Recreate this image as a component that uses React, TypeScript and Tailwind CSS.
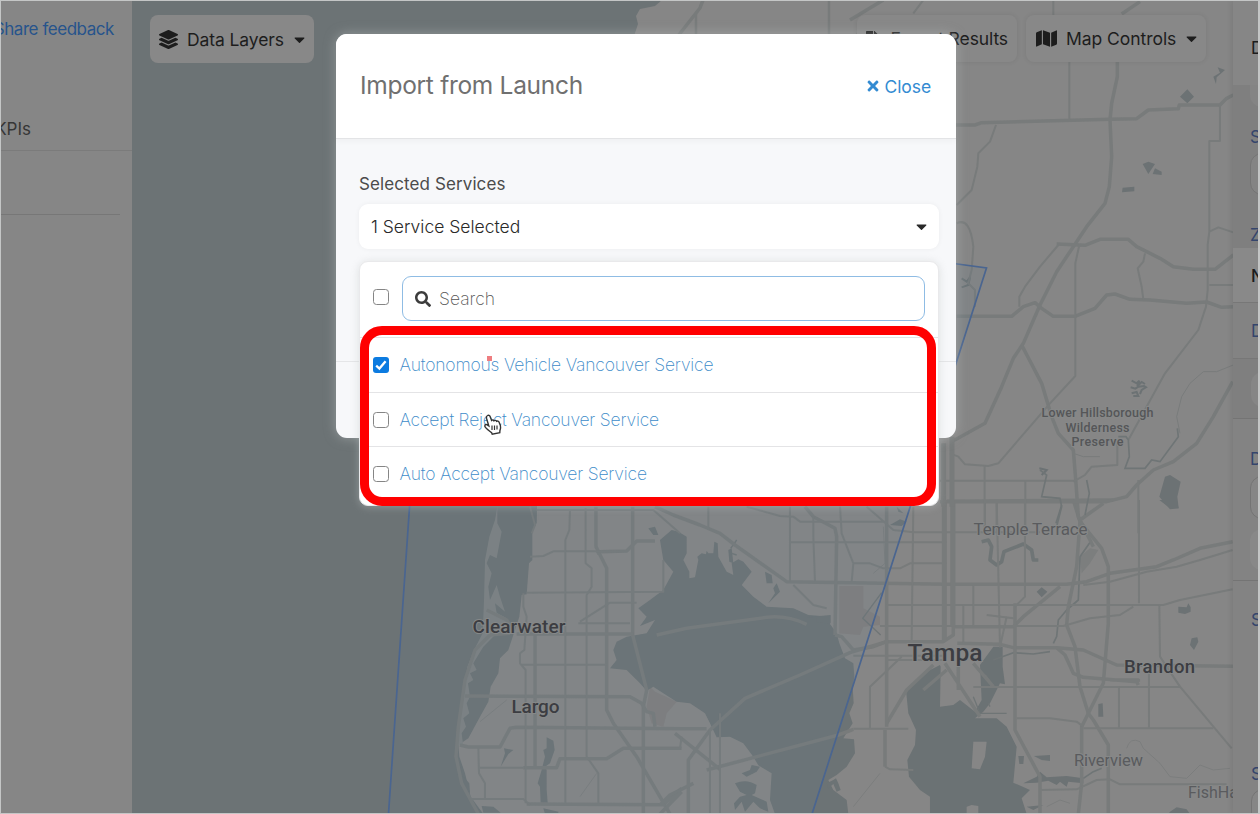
import React from "react";
import { FaLayerGroup, FaMap, FaTimes, FaSearch, FaCaretDown, FaFileExport } from "react-icons/fa";

const WATER = "#6c7375";
const LAND = "#868686";
const ROAD = "#787b7b";

const thickNorth = [
  "M310,820 L280,940 M-60,290 L55,100 M30,60 L130,0",
  "M832,180 L832,230 L815,310 L810,360 L815,470 L808,560 L795,610 L740,680 L700,740 L650,815 L600,915 L550,1030 L520,1075 L485,1160 L435,1270 L335,1325",
  "M340,375 L405,375 L425,368 L810,358 L890,356 L925,330 L1015,326 L1018,315 L1140,315 L1160,295 L1180,285",
  "M545,1035 L605,1150 L635,1250 L655,1300 L700,1350 L708,1450 L715,1550 L760,1640",
  "M350,949 L515,949 L550,920 L585,908 L605,925 L640,949 L705,949 L765,925 L800,885 L825,882 L870,898 L930,900 L1040,910 L1100,906 L1145,922 L1180,920",
  "M650,732 L735,736 L780,718 L865,718 L890,740 L960,775 L1000,800 L1060,808 L1125,808 L1180,765",
  "M1178,1145 L1120,1250 L1070,1330 L1000,1385 L940,1410 L890,1455 L860,1490 L800,1505 L720,1505 L300,1505",
  "M845,42 L900,5",
  "M720,1560 L790,1510",
];
const thinNorth = [
  "M640,0 L640,45 M688,185 L688,360 M220,40 L250,0",
  "M468,375 L450,425 L415,460 L412,500 L395,570 L350,615",
  "M1140,315 L1140,423 L1108,423 L1108,695 L1103,735 L1103,870 L1098,920 L1075,990 L975,1120 L865,1320",
  "M1108,695 L1135,682 L1180,697 M1108,855 L1180,855",
  "M718,735 L706,790 L706,1128 L630,1210 L475,1390 L445,1398 L375,1393 L355,1370 L330,1360",
  "M655,735 L600,800 L555,860 L538,890 L538,920",
  "M350,670 Q390,650 400,740 L395,810 L385,850 L405,870 L405,920",
  "M915,760 L910,785 L893,805 L905,860 L910,898",
  "M434,1397 L434,1600 M300,1442 L705,1442 M556,1442 L556,1600 M470,1510 L470,1600 M895,1440 L895,1600",
  "M700,1445 L735,1425 L755,1400 L832,1395 L832,1330",
];
const streams = [
  "M865,1320 L858,1310 L835,1310 M865,1320 L868,1370 L855,1405 L915,1405 L935,1380 L960,1385 L1015,1310 L1012,1285 M740,1440 L748,1480 L735,1545 M600,1410 L620,1425 L605,1490 L660,1495 L665,1520 L650,1580",
];

const thickSouth = [
  "M648,20 L648,140 L680,205 L680,630 L700,670 L770,770 L870,942",
  "M758,20 L758,405 L800,570 L790,620 L790,942",
  "M465,405 L465,800",
  "M410,402 L760,402 M650,160 L660,155 L740,153 L770,123 L825,123",
  "M240,735 L265,741 L360,741 L390,685 L410,682 L910,686 L980,686",
  "M430,803 L530,803 L540,776 L680,776 L730,745 L905,745",
  "M255,588 L750,590 L785,610 L800,635 L820,640 L825,680",
  "M440,912 L850,914 L905,865 M840,942 L905,875",
  "M320,330 L380,360 L395,385 M390,400 L330,405 L285,450 L255,540 L235,680 L228,770 L245,850 L295,942",
  "M825,20 L880,45 L960,75 L1020,100 L1065,135 L1220,245 L1700,253 L2060,253 L2120,245 L2190,220 L2330,200 L2380,180 L2460,145 L2558,125",
  "M1275,20 L1300,50 L1365,85 L1370,110 L1365,405",
  "M1365,405 L1385,410 L1420,450 L1480,440 L1520,425 L1690,425 L1720,405 L1720,380 L1900,380 L1930,350 L2040,260",
  "M1693,0 L1693,420 M1717,0 L1717,380 M1700,4 L2200,0",
  "M1732,430 L1860,433 L1900,443 L2030,443 L2055,465 L2080,520 L2110,532 L2270,545 L2275,555 M2275,545 L2275,540 L2190,540",
  "M2080,0 L2100,65 L2090,200 L2065,320 L2060,375 L2085,440 L2100,560 L2125,640 L2140,660 L2185,735 L2185,942",
  "M2100,65 L2165,145 L2185,200 L2185,370 L2170,550 L2105,680 L2105,850 L2095,942",
  "M2030,443 L2110,450 L2210,495 L2560,499",
  "M925,942 L925,780 L990,690 L1095,595 L1260,525 L1410,458 L1520,425",
  "M885,700 L1020,808 M840,915 L870,885 L940,850",
  "M1520,670 L1580,570 L1660,495 M1580,0 L1580,10",
  "M1520,20 L1520,680 M1515,690 L1515,800",
  "M1905,310 L1905,690 L1980,830 L1980,942",
  "M980,810 L1375,705 L1420,688",
  "M830,405 L920,385 L1160,352 Q1220,345 1280,373",
  "M1630,570 L1700,510 M1780,490 L1840,560 M1695,490 L1800,650 M1735,490 L1735,570",
];
const thinSouth = [
  "M430,280 L430,320 L440,350 L433,450 L420,460 L420,490 L437,510 L437,910",
  "M440,278 L850,275 L850,180 M450,170 L490,168 L520,154 L650,154 L720,155",
  "M570,30 L568,90 L556,120 L556,910 M617,25 L617,190 L635,205 L635,260 L620,285 L620,770 L655,820 L655,910",
  "M425,494 L680,494 M595,370 L750,370 M600,365 L690,308 L770,308 M295,745 L297,820 L315,850 L315,900 M300,803 L430,803 M270,897 L430,897 L450,915",
  "M450,20 L465,75 L455,100 M470,30 L820,30 L900,100",
  "M1230,20 L1230,245 M985,20 L985,90 M1230,127 L1700,127 M1300,50 L1300,110 L1305,245",
  "M1380,20 L1385,100 L1420,190 L1415,245 M1420,190 L1470,190 L1510,205 L1560,205 L1590,190 L1700,190",
  "M1100,20 L1200,48 L1240,50 L1260,65 L1520,65 M1460,20 L1540,90 L1600,97 L1980,97",
  "M1600,20 L1595,420 M1520,315 L2350,315 L2400,300 L2558,268 M1240,255 L1300,315 L1340,325",
  "M1500,378 L1920,378 L2050,378 L2130,355 L2220,345 L2260,320",
  "M1420,467 L1700,467 M1700,480 L1520,480 M1565,470 L1470,560 L1470,685",
  "M1420,686 L1585,686 M1515,800 L1530,808 L1600,810",
  "M1815,0 L1815,90 M1850,0 L1860,440 L1880,350 M1935,0 L1935,290 L1905,320 M2277,0 L2277,310 M2338,315 L2340,470 L2400,560 L2555,745",
  "M1780,255 L1780,380 M1750,315 L1750,430 M1780,561 L2400,561 M1840,560 L1815,525",
  "M1910,655 L2010,655 L2090,665 L2110,680 M2110,685 L2500,685 M2217,560 L2217,685 M2307,500 L2307,685",
  "M2110,255 L2190,245 L2300,215 L2390,200 L2460,180 L2558,150",
  "M1980,870 L2090,868 L2150,840 L2190,838 L2220,853 L2540,853",
  "M990,690 L990,942 M1020,640 L1020,942 M840,745 L900,745 L905,710",
  "M1820,345 L1900,355",
];

const bay =
  "M840,120 L875,90 L895,95 L920,110 L920,160 L910,180 L928,215 L928,235 L945,232 L955,180 L952,170 L965,160 L978,163 L980,152 L985,160 L1000,160 L1003,125 L1013,130 L1015,170 L1040,215 L1060,225 L1055,190 L1075,178 L1090,185 L1115,215 L1085,255 L1120,290 L1160,320 L1240,325 L1285,345 L1350,350 L1350,372 L1370,400 L1378,430 L1395,475 L1420,490 L1423,530 L1418,560 L1421,610 L1408,640 L1418,670 L1390,715 L1422,718 L1425,760 L1400,800 L1370,825 L1345,840 L1360,870 L1400,900 L1405,942 L1185,942 L1170,900 L1175,820 L1135,796 L1120,770 L1090,730 L1050,710 L1010,712 L990,670 L975,640 L930,610 L890,605 L850,580 L820,560 L800,572 L780,550 L740,510 L690,505 L710,480 L700,450 L710,425 L740,410 L800,400 L825,360 L780,378 L800,350 L775,325 L810,300 L850,270 L880,215 L850,180 Z";
const hillsborough =
  "M1680,495 L1640,515 L1578,570 L1585,640 L1608,690 L1605,735 L1582,780 L1587,830 L1620,870 L1650,890 L1650,942 L1940,942 L1925,895 L1950,870 L1900,848 L1910,740 L1880,680 L1850,655 L1785,655 L1810,635 L1830,610 L1860,550 L1875,553 L1868,500 L1868,440 L1840,440 L1800,495 L1805,600 L1785,635 L1740,600 L1720,615 L1680,620 L1682,500 Z";

type LabelProps = { x: number; y: number; size: number; width: number; fill?: string; weight?: number; children: string };
function Label({ x, y, size, width, fill = "#3c3d42", weight = 500, children }: LabelProps) {
  return (
    <text
      x={x}
      y={y}
      fontFamily="Roboto, sans-serif"
      fontSize={size}
      fontWeight={weight}
      fill={fill}
      stroke="#868888"
      strokeWidth={2}
      paintOrder="stroke"
      textAnchor="middle"
      textLength={width}
    >
      {children}
    </text>
  );
}

function MapCanvas() {
  return (
    <svg className="block h-[813px] w-[1101px]" viewBox="132 1 1101 813" preserveAspectRatio="none">
      <rect x={132} y={0} width={1101} height={814} fill={WATER} />
      <path d="M662,0 L655,6 L640,9 L636,16 L638,24 L634,36 L540,300 L537,507 L536,560 L1240,560 L1240,0 Z" fill={LAND} />
      <g transform="translate(380 500) scale(.33333)">
        <path
          d="M475,-10 L475,60 L457,95 L457,180 L447,190 L440,283 L425,285 L418,350 L400,405 L385,450 L360,475 L355,520 L332,560 L325,605 L300,650 L265,715 L235,735 L238,770 L255,820 L272,890 L310,942 L2570,942 L2570,-10 Z"
          fill={LAND}
        />
        <path
          d="M352,20 L345,60 L328,110 L315,180 L312,300 L308,400 L282,450 L262,500 L252,570 L242,640 L232,735 L250,738 L245,700 L258,680 L250,655 L268,640 L260,610 L270,590 L264,550 L280,540 L270,520 L290,510 L280,490 L310,440 L350,400 L400,395 L380,355 L350,338 L345,310 L375,335 L360,290 L350,255 L330,300 L325,260 L335,220 L320,190 L330,165 L350,175 L365,95 L352,70 Z"
          fill="#7e8283"
        />
        <path d="M1378,258 L1450,258 L1450,325 L1500,350 L1500,375 L1450,380 L1440,405 L1378,400 Z M810,560 L825,575 L890,605 L860,640 L850,680 L815,670 L800,620 Z" fill="#807e7e" />
        <path d="M2100,170 L2130,145 L2155,150 L2130,190 L2105,220 Z" fill="#7c7e7e" />
        <path d={bay} fill={WATER} />
        <path d={hillsborough} fill="#6b7274" />
        <path d="M1780,725 L1820,725 L1815,770 L1800,808 L1775,805 Z M1760,920 L1775,915 L1795,918 L1795,942 L1760,942 Z" fill={LAND} />
        <path
          d="M805,85 L825,80 L835,105 L820,105 Z M500,712 L520,722 L524,750 L510,790 L495,800 L500,810 L500,870 L503,908 L482,908 L480,860 L473,850 L485,810 L495,770 L490,750 L500,745 Z M372,745 L400,750 L385,762 L362,800 L375,760 Z M305,918 L340,920 L362,938 L310,938 Z M235,790 L250,830 L268,850 L270,880 L250,860 Z M490,925 L535,935 L535,942 L495,942 Z M1045,150 L1055,145 L1060,190 L1048,185 Z M1155,215 L1175,225 L1178,250 L1160,250 Z M1190,250 L1200,275 L1165,310 L1185,280 L1180,265 Z M1280,352 L1352,345 L1352,370 L1310,368 L1310,355 Z"
          fill={WATER}
        />
        <path
          d="M1065,850 Q1100,835 1130,855 L1125,880 L1115,885 L1160,905 L1165,935 L1140,925 L1120,905 L1095,935 L1085,905 L1065,930 L1062,910 L1080,890 L1100,885 L1080,875 Z M1085,820 L1110,810 L1115,795 L1140,800 L1130,815 L1100,830 Z"
          fill={WATER}
        />
        <path d="M1340,850 L1360,840 L1368,835 L1375,850 L1382,870 L1370,875 L1360,852 L1345,865 Z M1530,75 L1560,58 L1580,65 L1565,78 Z M1550,20 L1570,40 L1555,35 Z" fill={WATER} />
        <path
          d="M1970,275 L1985,262 L2002,275 L1985,292 Z M2395,320 L2420,322 L2425,310 L2432,322 L2432,335 L2415,342 L2395,338 Z M2435,415 L2452,412 L2455,425 L2442,450 L2430,435 Z M2155,612 L2168,610 L2170,650 L2155,650 Z M1962,768 L2010,765 L2010,783 L1985,780 Z M1915,768 L1932,768 L1930,792 L1918,792 Z M1930,850 L1970,830 L1980,815 L2000,832 L2060,828 L2110,835 L2110,850 L2065,845 L2060,860 L2040,845 L2030,855 L2005,842 L1970,848 Z M1940,920 L1990,915 L1960,930 Z M2370,935 L2390,922 L2420,928 L2430,942 L2365,942 Z M2338,0 L2390,0 L2396,25 L2370,25 Z"
          fill="#6c7274"
        />
        <g fill="none" stroke="#6f7576" strokeLinejoin="round">
          <path strokeWidth="11" d="M1805,125 L1825,120 L1835,140 L1830,180 L1850,195 L1865,185 L1872,155 L1930,132 L1955,150 L1960,180 L1975,180" />
          <path strokeWidth="5" d="M2045,15 L2028,70 M2135,120 L2100,170 L2095,300 L2060,330 L2035,360 L2030,410 L2020,430 M1840,480 L1900,458 L1960,462 L2010,455 M2110,835 L2140,815 L2165,805" />
          <path strokeWidth="4" d="M1505,278 L1448,355 L1502,405 M1780,590 L1800,640 L1880,640 M1825,610 L1830,620 M1070,120 L1052,145 M1055,160 L1070,165" />
          <path strokeWidth="3" stroke="#7b7d7d" d="M2240,745 Q2250,710 2280,725 L2290,745 L2340,790 L2370,830 L2420,835 L2460,795 L2500,810 L2550,805 M1510,80 L1515,190 L1480,220 M2000,920 L2040,900 L2070,910 M300,665 L380,600 M600,890 L650,820 M1420,920 L1500,820" />
        </g>
        <g fill="none" stroke={ROAD} strokeLinejoin="round">
          <g strokeWidth="10.5">{thickSouth.map((d) => <path key={d} d={d} />)}</g>
          <g strokeWidth="6">{thinSouth.map((d) => <path key={d} d={d} />)}</g>
          <path d="M1693,0 L1693,420 M1719,0 L1719,380" strokeWidth="15" />
        </g>
        <path d="M90,20 L25,942 L1295,942 L1590,20 Z" fill="#5f7f8f" fillOpacity=".1" />
      </g>
      <g transform="translate(840 0) scale(.33333)">
        <path
          d="M1020,290 L1042,268 L1062,290 L1042,310 Z M908,492 L925,485 L945,492 L925,522 Z M945,505 L965,515 L965,525 L938,522 Z M848,563 L883,560 L883,574 L846,577 Z M1120,230 L1140,218 L1133,202 L1155,210 L1130,232 L1128,252 Z M975,1430 L990,1425 L1022,1445 L1012,1490 L1016,1525 L990,1528 L958,1490 Z"
          fill="#6c7274"
        />
        <path d="M875,1142 L890,1150 L898,1142 L892,1158 L905,1146 L915,1152 M872,1162 L886,1166 L895,1160 L912,1158 L918,1162 L905,1170 L900,1182 M875,1180 L890,1176 L895,1188 L880,1188 M365,835 L380,845 L390,832 L385,855 L365,862 M598,1405 L620,1410 L605,1425" fill="none" stroke="#6c7274" strokeWidth="6" />
        <g fill="none" stroke={ROAD} strokeLinejoin="round">
          <g strokeWidth="10.5">{thickNorth.map((d) => <path key={d} d={d} />)}</g>
          <g strokeWidth="6">{thinNorth.map((d) => <path key={d} d={d} />)}</g>
          <path d="M311,1330 L311,1520 M336,1310 L336,1520" strokeWidth="15" />
          <path d="M1180,1095 L1130,1115 L1090,1115 L1050,1150 L1025,1190 L1010,1250 L1020,1300 M780,1370 L730,1370 L700,1360" strokeWidth="3" />
        </g>
        <g fill="none" stroke="#6f7576" strokeWidth="5">{streams.map((d) => <path key={d} d={d} />)}</g>
        <path d="M440,806 L350,1090 L350,790 Z" fill="#5f7f8f" fillOpacity=".12" />
      </g>
      <g fill="none" stroke={ROAD}>
        <path d="M678,36 L700,8 L703,0" strokeWidth="3.5" />
        <path d="M696,14 V36 M829,0 V36" strokeWidth="2.4" />
      </g>
      <path d="M410,500 L388.5,814 M950,263 L986.5,268 L812,814" fill="none" stroke="#4a6590" strokeWidth="1.7" />
      <Label x={519} y={633} size={19} width={93}>Clearwater</Label>
      <Label x={535.5} y={713} size={19} width={48}>Largo</Label>
      <Label x={945} y={661} size={24.5} width={75}>Tampa</Label>
      <Label x={1159.5} y={673} size={18.5} width={71}>Brandon</Label>
      <Label x={1030.5} y={535} size={17} width={114} weight={400} fill="#5a5b5e">Temple Terrace</Label>
      <Label x={1108.5} y={766} size={16.5} width={69} weight={400} fill="#5a5b5e">Riverview</Label>
      <Label x={1213} y={798} size={16} width={50} weight={400} fill="#5a5b5e">FishHa</Label>
      <Label x={1097.5} y={417} size={12.5} width={112} fill="#555658">Lower Hillsborough</Label>
      <Label x={1097.5} y={431.5} size={12.5} width={64} fill="#555658">Wilderness</Label>
      <Label x={1097.5} y={446} size={12.5} width={52} fill="#555658">Preserve</Label>
    </svg>
  );
}

function Sidebar() {
  return (
    <aside className="flex w-[131px] shrink-0 flex-col overflow-hidden bg-[#868686] whitespace-nowrap">
      <div className="flex h-[114px] justify-end pt-[15px] pr-[18px] text-[17px] leading-[26px] tracking-[-0.45px] text-[#27548c]">
        <span>Share feedback</span>
      </div>
      <div className="flex h-9 justify-end border-b border-[#7b7b7b] pr-[101px] text-[17px] leading-7 text-[#363636]">
        <span>KPIs</span>
      </div>
      <div className="mr-3 h-16 border-b border-[#777]" />
    </aside>
  );
}

function DetailsPanel() {
  return (
    <aside className="relative flex w-[25px] shrink-0 flex-col overflow-hidden bg-[#838383] pl-[18px] text-[17px] leading-none text-[#34456c] shadow-[-2px_0_5px_rgba(0,0,0,0.08)]">
      <div className="-ml-[18px] h-[84px] shrink-0 bg-[#868686] pt-[39px] pl-[18px] text-[#1c1c1c]">D</div>
      <div className="-ml-[18px] h-[163px] shrink-0 bg-[#7f7f7f] pl-[17px]">
        <div className="h-[22px] w-10 rounded-bl-xl bg-[#848484]" />
        <div className="mt-[22px]">S</div>
        <div className="mt-[7px] h-[42px] w-10 rounded-xl border border-[#747474] bg-[#848484]" />
        <div className="mt-[32px]">Z</div>
      </div>
      <div className="-ml-[18px] h-[55px] shrink-0 border-b border-[#777] bg-[#898989] pt-[20px] pl-[18px] font-medium text-[#1c1c1c]">N</div>
      <div className="-ml-[18px] h-14 shrink-0 border-b border-[#777] pt-[20px] pl-[18px]">D</div>
      <div className="-ml-[18px] h-[60px] shrink-0 border-b border-[#747474] bg-[#7f7f7f] pt-[13px] pl-[18px]">
        <div className="h-[35px] w-10 rounded-xl bg-[#868686]" />
      </div>
      <div className="-ml-[18px] h-[162px] shrink-0 border-b border-[#747474] pt-[32px] pl-[17px]">
        D
        <div className="mt-[8px] h-[43px] w-10 rounded-xl border border-[#747474] bg-[#868686]" />
        <div className="mt-[10px] h-[41px] w-10 rounded-xl bg-[#888]" />
      </div>
      <div className="mt-[31px] h-[154px] shrink-0">S</div>
      <div className="shrink-0">S</div>
      <div className="mt-[6px] h-[40px] w-10 shrink-0 rounded-xl border border-[#747474] bg-[#868686]" />
    </aside>
  );
}

function Toolbar() {
  const button = "flex items-center rounded-lg bg-[#888888] text-[17.5px] text-[#1d1d1d] whitespace-nowrap";
  return (
    <div className="absolute inset-x-0 top-[14px] flex items-start pl-[18px]">
      <button className={`${button} h-12 w-[164px] pl-[9px]`}>
        <FaLayerGroup className="mr-[9px] size-[19px]" />
        <span className="relative top-px tracking-[-0.1px]">Data Layers</span>
        <FaCaretDown className="ml-[7px] size-[17px]" />
      </button>
      <div className="ml-auto flex gap-[9px] pr-[27px]">
        <button className={`${button} h-[47px] w-[160px] justify-end pr-[9px] shadow-[0_0_5px_rgba(0,0,0,0.08)]`}>
          <FaFileExport className="mr-[7px] size-[18px]" />
          <span className="relative top-px tracking-[-0.1px]">Export Results</span>
        </button>
        <button className={`${button} h-[47px] w-[180px] pl-[10px] shadow-[0_0_5px_rgba(0,0,0,0.08)]`}>
          <FaMap className="mr-[9px] size-[21px]" />
          <span className="relative top-px tracking-[-0.05px]">Map Controls</span>
          <FaCaretDown className="ml-[7px] size-[17px]" />
        </button>
      </div>
    </div>
  );
}

function Checkbox({ checked = false }: { checked?: boolean }) {
  return checked ? (
    <span className="flex size-4 shrink-0 items-center justify-center rounded-[3px] bg-[#0c7be0]">
      <svg viewBox="0 0 16 16" className="size-4">
        <path d="M3.2 8.6 6.4 11.6 12.6 4.2" fill="none" stroke="#fff" strokeWidth="2.3" />
      </svg>
    </span>
  ) : (
    <span className="size-4 shrink-0 rounded-[3.5px] border-[1.5px] border-[#858585] bg-white" />
  );
}

const services = [
  { name: "Autonomous Vehicle Vancouver Service", checked: true, row: "h-[55px] border-b" },
  { name: "Accept Reject Vancouver Service", checked: false, row: "h-[54px] border-b" },
  { name: "Auto Accept Vancouver Service", checked: false, row: "h-[54px]" },
];

function ServiceMenu() {
  return (
    <div className="absolute top-[227px] left-[23px] h-[245px] w-[580px] rounded-[9px] border border-[#e9e9eb] bg-white shadow-[0_1px_9px_rgba(190,195,195,0.45)]">
      <div className="flex h-[76px] items-start border-b border-[#e4e4e6] pt-[14px] pl-[13px]">
        <div className="mt-[13px] flex">
          <Checkbox />
        </div>
        <div className="ml-[13px] flex h-[45px] w-[523px] items-center rounded-[9px] border-[1.5px] border-[#8fbce4] pl-[12px]">
          <FaSearch className="mt-px size-4 text-[#3c3c3c]" />
          <span className="ml-[8px] pt-[2px] text-[17.5px] font-extralight text-[#555]">Search</span>
        </div>
      </div>
      {services.map((s) => (
        <div key={s.name} className={`flex items-center border-[#e4e4e6] pl-[13px] ${s.row}`}>
          <Checkbox checked={s.checked} />
          <span className="ml-[10.5px] pt-px text-[17.5px] font-extralight tracking-[-0.2px] whitespace-nowrap text-[#3d8bc9]">{s.name}</span>
        </div>
      ))}
      <div className="absolute top-[64px] left-0 h-[180px] w-[576px] rounded-[22px] border-[9px] border-[#ff0000]" />
      <span className="absolute top-[94px] left-[127px] size-[5px] bg-[#ee7d80]" />
      <svg viewBox="0 0 20 22" className="absolute top-[152px] left-[123px] h-[22px] w-[20px]">
        <path
          d="M4.5 1.5C5.5.9 6.7 1.4 7.1 2.5L8.6 6.4C9.1 5.8 10.4 5.8 11 6.8 11.9 6 13.2 6.3 13.6 7.3 14.5 6.8 15.6 7.1 16 8.1L17.4 11.6C17.9 13.2 17.4 15.3 16.9 16.7L16.8 18.7 9.2 20.2 8.6 18.6C7 17.3 4.5 16 2.4 13.4 1 11.7 2.2 10.2 3.8 10.7L5.8 12 3.5 4.2C3.2 3 3.6 2 4.5 1.5Z"
          fill="#fff"
          stroke="#333"
          strokeWidth="1.4"
        />
        <path d="M9 11.5V16M11.5 11.5V16M14 11.5V15.5" stroke="#333" strokeWidth="1.2" />
      </svg>
    </div>
  );
}

function ImportDialog() {
  return (
    <div className="absolute top-[34px] left-[336px] flex h-[404px] w-[620px] flex-col rounded-[11px] bg-[#f7f8fa] shadow-[0_0_12px_rgba(190,195,195,0.5)]">
      <header className="flex h-[105px] items-center justify-between rounded-t-[11px] border-b border-[#e3e4e6] bg-white pr-[25px] pl-[24px] shadow-[0_2px_6px_rgba(0,0,0,0.04)]">
        <h1 className="pb-[2px] text-[24.5px] tracking-[-0.3px] text-[#707070]">Import from Launch</h1>
        <button className="flex items-center gap-[4px] text-[17.5px] text-[#338bd2]">
          <FaTimes className="size-4" />
          <span className="relative top-px tracking-[-0.1px]">Close</span>
        </button>
      </header>
      <div className="flex h-[223px] flex-col border-b border-[#e5e6e8] px-[23px] pt-[31px]">
        <label className="text-[17px] leading-[28px] tracking-[0.1px] text-[#4b4b4b]">Selected Services</label>
        <div className="mt-[6px] flex h-[45px] w-[580px] items-center justify-between rounded-[9px] bg-white pr-[9px] pl-[12px] text-[17.5px] font-light text-[#292929] shadow-[0_0_5px_rgba(0,0,0,0.05)]">
          <span className="pt-[2px]">1 Service Selected</span>
          <FaCaretDown className="size-[17px]" />
        </div>
      </div>
      <ServiceMenu />
    </div>
  );
}

export default function App() {
  return (
    <div className="relative flex h-[814px] w-[1260px] overflow-hidden border-t border-r-2 border-b border-l border-[#c4c6c6] bg-[#868686] font-['Inter','Liberation_Sans',sans-serif]">
      <Sidebar />
      <main className="relative w-[1101px] shrink-0 overflow-hidden">
        <MapCanvas />
        <Toolbar />
      </main>
      <DetailsPanel />
      <div className="absolute -top-px -left-px">
        <ImportDialog />
      </div>
    </div>
  );
}
